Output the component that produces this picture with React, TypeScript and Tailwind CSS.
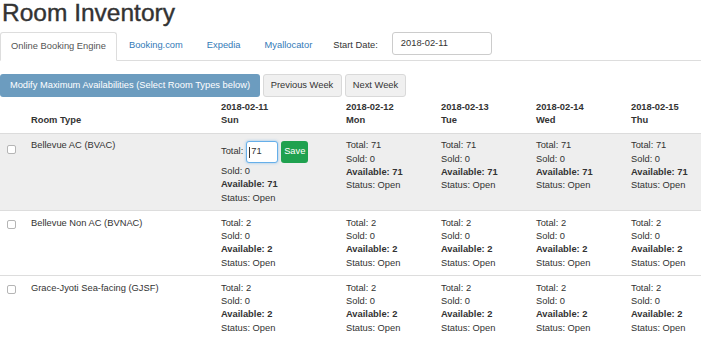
import React from "react";

const days = [
  { date: "2018-02-11", day: "Sun" },
  { date: "2018-02-12", day: "Mon" },
  { date: "2018-02-13", day: "Tue" },
  { date: "2018-02-14", day: "Wed" },
  { date: "2018-02-15", day: "Thu" },
];

const rooms = [
  { name: "Bellevue AC (BVAC)", total: 71, editing: true },
  { name: "Bellevue Non AC (BVNAC)", total: 2, editing: false },
  { name: "Grace-Jyoti Sea-facing (GJSF)", total: 2, editing: false },
];

const cols = "grid grid-cols-[25.67px_190px_125px_95px_95px_95px_1fr]";

const Checkbox = ({ offset }: { offset: string }) => (
  <div className={`${offset} ml-[1.5px] w-[9px] h-[9px] rounded-[2px] border border-[#b5b5b5] bg-white`} />
);

const Stats = ({ total, editing }: { total: number; editing: boolean }) => (
  <div className="flex flex-col">
    {editing ? (
      <div className="flex items-center h-[25.67px]">
        <span>Total:</span>
        <div className="ml-[3px] flex items-center w-[32px] h-[22px] rounded-[3px] border border-[#66afe9] bg-white pl-[2px] shadow-[0_0_3px_rgba(102,175,233,0.7)]">
          <span className="w-px h-[11px] bg-[#333]" />
          <span className="ml-px">{total}</span>
        </div>
        <button className="ml-[3px] w-[27px] h-[22px] rounded-[3px] bg-[#1fa14f] text-white">
          Save
        </button>
      </div>
    ) : (
      <div>Total: {total}</div>
    )}
    <div>Sold: 0</div>
    <div className="font-bold">Available: {total}</div>
    <div>Status: Open</div>
  </div>
);

export default function App() {
  return (
    <div className="w-[701px] h-[340px] overflow-hidden bg-white text-[#333] font-['Liberation_Sans',Arial,sans-serif] text-[9.33px] leading-[13.33px]">
      <h1 className="pl-[2px] text-[24.5px] leading-[25px] font-normal [-webkit-text-stroke:0.4px_#333]">
        Room Inventory
      </h1>

      <div className="mt-[7px] flex items-start h-[29px] border-b border-[#ddd]">
        <div className="h-[29px] -mb-px flex items-center px-[10px] bg-white border border-[#ddd] border-b-white rounded-t-[3px] text-[#555]">
          Online Booking Engine
        </div>
        <div className="h-[28px] flex items-center px-[12px] text-[#337ab7]">Booking.com</div>
        <div className="h-[28px] flex items-center px-[12px] text-[#337ab7]">Expedia</div>
        <div className="h-[28px] flex items-center px-[12px] text-[#337ab7]">Myallocator</div>
        <div className="h-[28px] flex items-center ml-[9px]">Start Date:</div>
        <div className="ml-[14px] w-[100px] h-[23px] flex items-center pl-[8px] border border-[#ccc] rounded-[3px] bg-white">
          2018-02-11
        </div>
      </div>

      <div className="mt-[13px] flex items-center h-[23px]">
        <button className="w-[260px] h-[23px] rounded-[3px] bg-[#6c9cbf] text-white">
          Modify Maximum Availabilities (Select Room Types below)
        </button>
        <button className="ml-[2.5px] w-[79px] h-[23px] rounded-[3px] border border-[#d9d9d9] bg-[#f0f0f0]">
          Previous Week
        </button>
        <button className="ml-[3.5px] w-[61px] h-[23px] rounded-[3px] border border-[#d9d9d9] bg-[#f0f0f0]">
          Next Week
        </button>
      </div>

      <div className={`${cols} pt-[4px] pb-[5.33px] border-b border-[#dcdcdc] font-bold`}>
        <div />
        <div className="px-[5.33px] flex flex-col">
          <span>&nbsp;</span>
          <span>Room Type</span>
        </div>
        {days.map((d) => (
          <div key={d.date} className="px-[5.33px] flex flex-col">
            <span>{d.date}</span>
            <span>{d.day}</span>
          </div>
        ))}
      </div>

      {rooms.map((r, i) => (
        <div
          key={r.name}
          className={`${cols} py-[5.33px] ${i > 0 ? "border-t border-[#ddd]" : ""} ${r.editing ? "bg-[#eeeeee]" : "bg-white"}`}
        >
          <div className="pl-[5.33px]">
            <Checkbox offset={r.editing ? "mt-[5.5px]" : "mt-[3px]"} />
          </div>
          <div className="px-[5.33px]">{r.name}</div>
          {days.map((d, j) => (
            <div key={d.date} className="px-[5.33px]">
              <Stats total={r.total} editing={r.editing && j === 0} />
            </div>
          ))}
        </div>
      ))}
    </div>
  );
}
